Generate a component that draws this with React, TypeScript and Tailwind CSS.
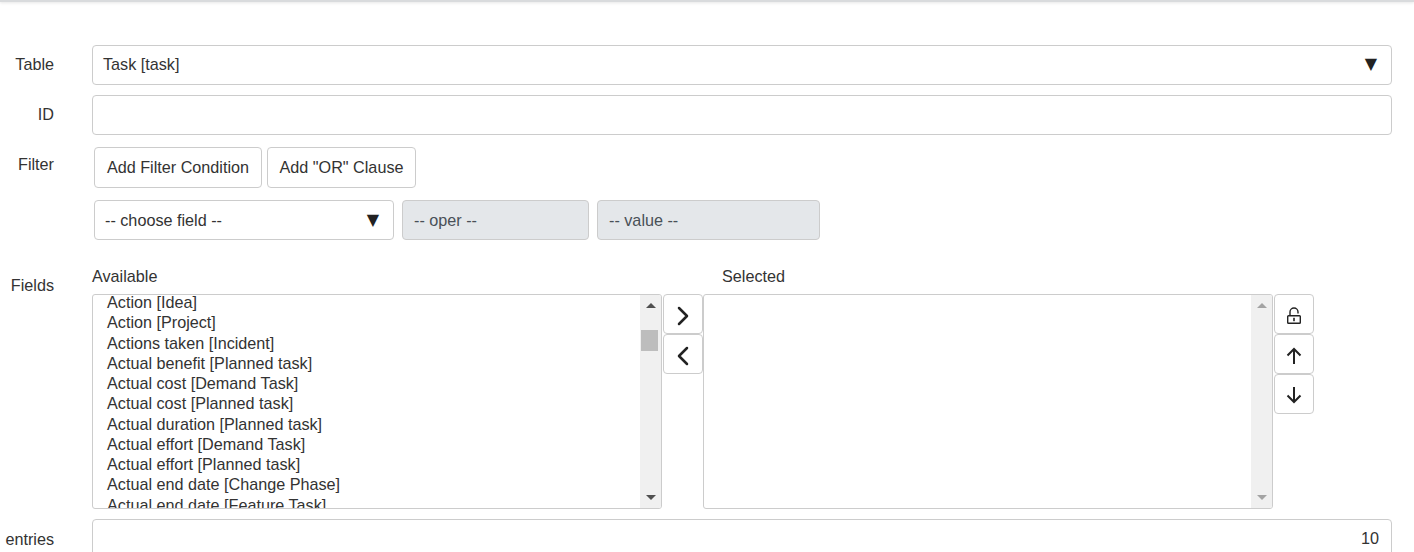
import React from 'react';
import { ChevronRight, ChevronLeft } from 'lucide-react';

const availableFields = [
  'Action [Idea]',
  'Action [Project]',
  'Actions taken [Incident]',
  'Actual benefit [Planned task]',
  'Actual cost [Demand Task]',
  'Actual cost [Planned task]',
  'Actual duration [Planned task]',
  'Actual effort [Demand Task]',
  'Actual effort [Planned task]',
  'Actual end date [Change Phase]',
  'Actual end date [Feature Task]',
];

const Label: React.FC<{ children: React.ReactNode; className?: string }> = ({ children, className = '' }) => (
  <div className={`w-[54px] shrink-0 text-right whitespace-nowrap ${className}`}>{children}</div>
);

const SquareButton: React.FC<{ children: React.ReactNode; className?: string }> = ({ children, className = 'pt-[4px]' }) => (
  <button className={`w-10 h-10 bg-white border border-[#ccc] rounded flex items-center justify-center text-[#222] ${className}`}>
    {children}
  </button>
);

const Scrollbar: React.FC<{ disabled?: boolean }> = ({ disabled = false }) => (
  <div className="w-[21px] shrink-0 bg-[#f0f0f0] flex flex-col items-center justify-between pt-[8px] pb-[8px] relative">
    <svg width="10" height="5" viewBox="0 0 10 5" className={disabled ? 'text-[#a3a3a3]' : 'text-[#505050]'}>
      <polygon points="5,0 10,5 0,5" fill="currentColor" />
    </svg>
    {!disabled && <div className="absolute left-[1px] top-[35px] w-[17px] h-[21px] bg-[#bdbdbd]" />}
    <svg width="10" height="5" viewBox="0 0 10 5" className={disabled ? 'text-[#a3a3a3]' : 'text-[#505050]'}>
      <polygon points="0,0 10,0 5,5" fill="currentColor" />
    </svg>
  </div>
);

export default function App() {
  return (
    <div className="h-[552px] overflow-hidden bg-white text-[16.2px] text-[#333] font-['Liberation_Sans',Arial,sans-serif]">
      <div className="h-[2px] bg-[#d9dbdd] shadow-[0_1px_3px_rgba(0,0,0,0.12)]" />

      <div className="pt-[43px] pr-[22px] flex flex-col">
        {/* Table */}
        <div className="flex gap-[38px]">
          <Label className="pt-[7px]">Table</Label>
          <div className="flex-1 h-10 border border-[#ccc] rounded flex items-center justify-between pl-[10px] pr-[14px] pb-[2px]">
            <span>Task [task]</span>
            <span className="font-['DejaVu_Sans',sans-serif] text-[#222] text-[16px] leading-none">▼</span>
          </div>
        </div>

        {/* ID */}
        <div className="flex gap-[38px] mt-[10px]">
          <Label className="pt-[7px]">ID</Label>
          <div className="flex-1 h-10 border border-[#ccc] rounded" />
        </div>

        {/* Filter */}
        <div className="flex gap-[38px] mt-[12px]">
          <Label className="pt-[5px]">Filter</Label>
          <div className="pl-[2px] flex flex-col gap-[12px]">
            <div className="flex gap-[5px]">
              <button className="h-[41px] w-[168px] bg-white border border-[#ccc] rounded">Add Filter Condition</button>
              <button className="h-[41px] w-[149px] bg-white border border-[#ccc] rounded">Add "OR" Clause</button>
            </div>
            <div className="flex">
              <div className="w-[300px] h-10 border border-[#ccc] rounded flex items-center justify-between pl-[10px] pr-[14px] pt-px">
                <span>-- choose field --</span>
                <span className="font-['DejaVu_Sans',sans-serif] text-[#222] text-[16px] leading-none pb-[2px]">▼</span>
              </div>
              <div className="ml-[8px] w-[187px] h-10 border border-[#ccc] rounded bg-[#e4e7ea] flex items-center pl-[11px] pt-px text-[#495057]">-- oper --</div>
              <div className="ml-[8px] w-[223px] h-10 border border-[#ccc] rounded bg-[#e4e7ea] flex items-center pl-[11px] pt-px text-[#495057]">-- value --</div>
            </div>
          </div>
        </div>

        {/* Fields */}
        <div className="flex gap-[38px] mt-[26px]">
          <Label className="pt-[7px]">Fields</Label>
          <div className="flex-1">
            <div className="flex h-[20px] mb-[8px] items-center">
              <div className="w-[630px]">Available</div>
              <div>Selected</div>
            </div>
            <div className="flex h-[215px]">
              <div className="w-[570px] border border-[#ccc] rounded-[3px] flex overflow-hidden">
                <div className="flex-1 pl-[14px] text-[#333] leading-[20.25px] -mt-[3px] overflow-hidden whitespace-nowrap">
                  {availableFields.map((f) => (
                    <div key={f}>{f}</div>
                  ))}
                </div>
                <Scrollbar />
              </div>
              <div className="w-[41px] pl-px flex flex-col">
                <SquareButton><ChevronRight size={32} strokeWidth={1.9} /></SquareButton>
                <SquareButton><ChevronLeft size={32} strokeWidth={1.9} /></SquareButton>
              </div>
              <div className="w-[570px] border border-[#ccc] rounded-[3px] flex justify-end overflow-hidden">
                <Scrollbar disabled />
              </div>
              <div className="pl-px flex flex-col">
                <SquareButton>
                  <svg width="16" height="18" viewBox="0 0 16 18" fill="none" stroke="currentColor" strokeWidth="1.4">
                    <rect x="1.7" y="8.7" width="12.6" height="7.6" rx="0.8" />
                    <path d="M4 8.5V5a4 4 0 0 1 8 0V6.5" />
                    <rect x="7.2" y="10.8" width="1.6" height="3.4" fill="currentColor" stroke="none" />
                  </svg>
                </SquareButton>
                <SquareButton>
                  <svg width="16" height="18" viewBox="0 0 16 18" fill="none" stroke="currentColor" strokeWidth="2">
                    <path d="M1.5 8.5L8 2l6.500 6.500M8 2v15" />
                  </svg>
                </SquareButton>
                <SquareButton className="pt-[2px]">
                  <svg width="16" height="18" viewBox="0 0 16 18" fill="none" stroke="currentColor" strokeWidth="2">
                    <path d="M1.5 9.500L8 16l6.500-6.500M8 16V1" />
                  </svg>
                </SquareButton>
              </div>
            </div>
          </div>
        </div>

        {/* entries */}
        <div className="flex gap-[38px] mt-[10px]">
          <Label className="pt-[8px]">entries</Label>
          <div className="flex-1 h-10 border border-[#ccc] rounded flex items-center justify-end pr-[12px] pb-[2px]">10</div>
        </div>
      </div>
    </div>
  );
}
